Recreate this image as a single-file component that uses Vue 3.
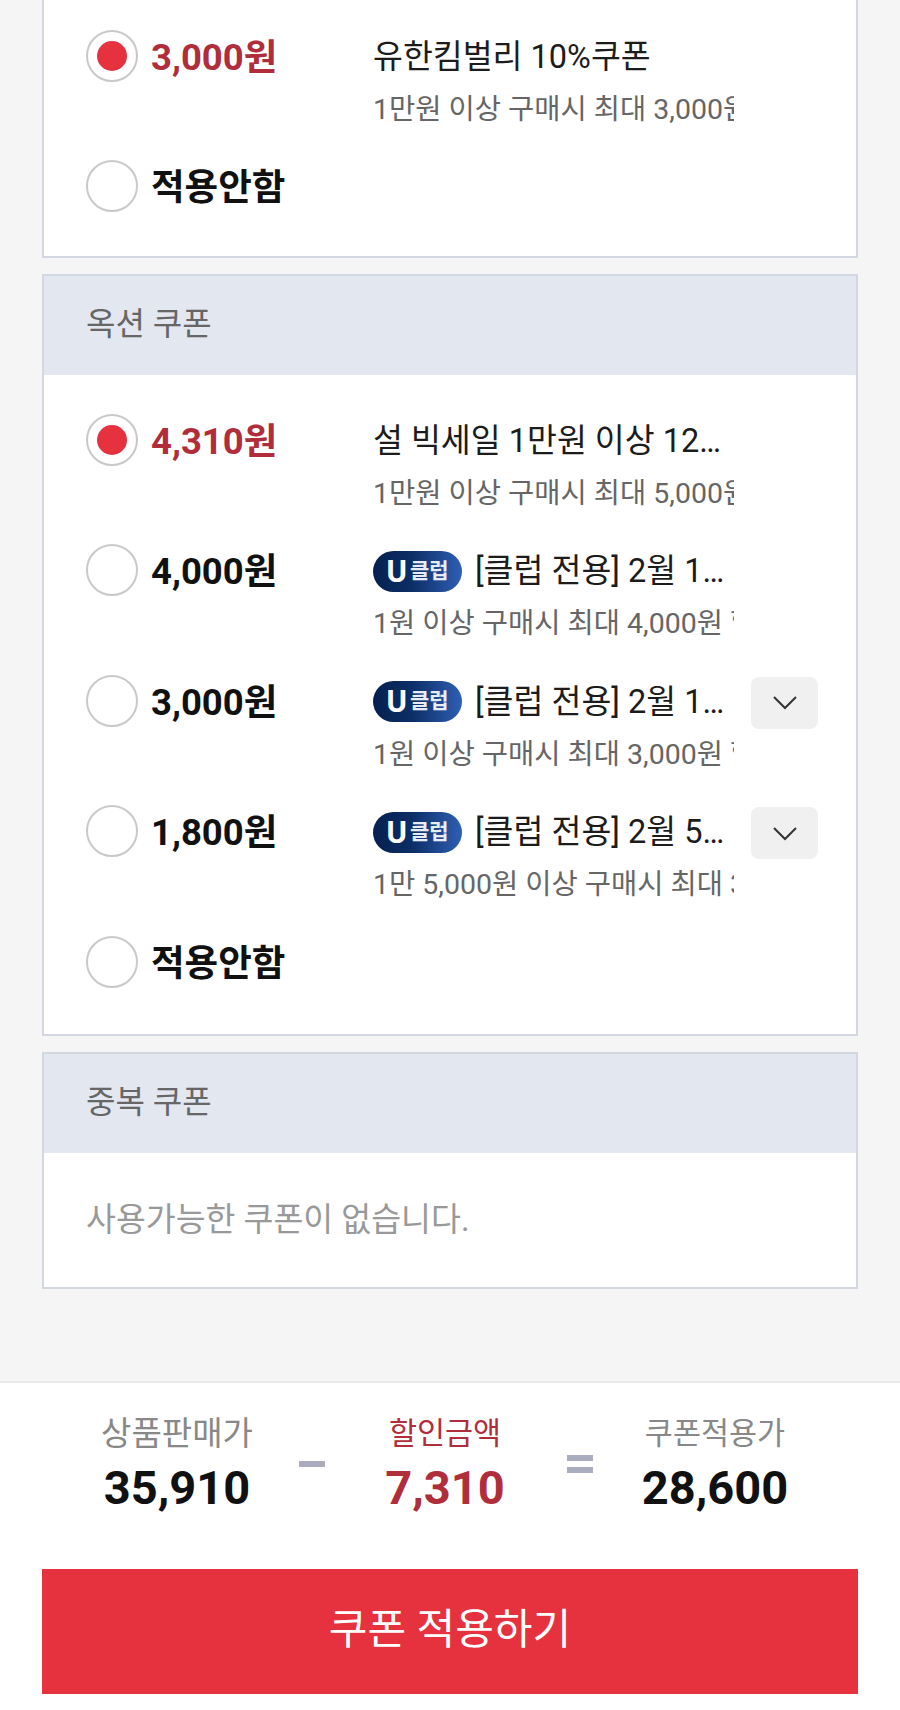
<script setup>
const first = [
  { amount: '3,000원', title: '유한킴벌리 10%쿠폰', sub: '1만원 이상 구매시 최대 3,000원 할인', on: true },
  { amount: '적용안함' }
]
const second = [
  { amount: '4,310원', title: '설 빅세일 1만원 이상 12% 할인쿠폰', sub: '1만원 이상 구매시 최대 5,000원 할인', on: true },
  { amount: '4,000원', title: '[클럽 전용] 2월 10% 할인쿠폰', sub: '1원 이상 구매시 최대 4,000원 할인', club: true },
  { amount: '3,000원', title: '[클럽 전용] 2월 10% 할인쿠폰', sub: '1원 이상 구매시 최대 3,000원 할인', club: true, more: true },
  { amount: '1,800원', title: '[클럽 전용] 2월 5% 할인쿠폰', sub: '1만 5,000원 이상 구매시 최대 3,000원 할인', club: true, more: true },
  { amount: '적용안함' }
]
const sections = [
  { id: 'a', rows: first, cls: 'clipped' },
  { id: 'b', name: '옥션 쿠폰', rows: second },
  { id: 'c', name: '중복 쿠폰', empty: '사용가능한 쿠폰이 없습니다.' }
]
</script>

<template>
  <div class="page">
    <main class="list">
      <section v-for="s in sections" :key="s.id" class="card" :class="s.cls">
        <h2 v-if="s.name" class="head">{{ s.name }}</h2>
        <p v-if="s.empty" class="empty">{{ s.empty }}</p>
        <div v-else class="rows">
          <div v-for="(r, i) in s.rows" :key="i" class="row">
            <span class="radio" :class="{ on: r.on }"></span>
            <span class="amount" :class="{ red: r.on }">{{ r.amount }}</span>
            <div v-if="r.title" class="info">
              <div class="title-line">
                <span v-if="r.club" class="badge"><b>U</b><i>클럽</i></span>
                <span class="title" :class="{ tight: r.club }">{{ r.title }}</span>
              </div>
              <div class="sub">{{ r.sub }}</div>
            </div>
            <button v-if="r.more" class="more" type="button" aria-label="더보기">
              <svg width="26" height="15" viewBox="0 0 26 15"><path d="M2 2 L13 13 L24 2" fill="none" stroke="#333" stroke-width="2"/></svg>
            </button>
          </div>
        </div>
      </section>
    </main>

    <footer class="foot">
      <div class="sum">
        <div class="cell">
          <span class="lab">상품판매가</span>
          <strong class="num">35,910</strong>
        </div>
        <span class="op minus"></span>
        <div class="cell">
          <span class="lab small red">할인금액</span>
          <strong class="num red">7,310</strong>
        </div>
        <span class="op equal"></span>
        <div class="cell">
          <span class="lab small">쿠폰적용가</span>
          <strong class="num">28,600</strong>
        </div>
      </div>
      <button class="apply" type="button">쿠폰 적용하기</button>
    </footer>
  </div>
</template>

<style>
html, body { margin: 0; background: #f5f5f6; }
</style>

<style scoped>
.page {
  height: 1710px;
  overflow: hidden;
  display: flex;
  flex-direction: column;
  background: #f5f5f6;
  font-family: Roboto, "Noto Sans CJK KR", sans-serif;
  color: #111;
}
.list {
  padding: 0 42px;
  display: flex;
  flex-direction: column;
  gap: 16px;
}
.card {
  background: #fff;
  border: 2px solid #d3d7e2;
}
.clipped { border-top: 0; }
.clipped .rows { padding-top: 30px; padding-bottom: 44px; gap: 77.6px; }
.head {
  margin: 0;
  height: 99px;
  box-sizing: border-box;
  padding: 0 0 8px 42px;
  display: flex;
  align-items: center;
  background: #e3e7f0;
  font-size: 32px;
  font-weight: 400;
  color: #666;
}
.rows {
  padding: 39px 38px 46px 42px;
  display: flex;
  flex-direction: column;
  gap: 78.6px;
}
.row {
  height: 52px;
  display: flex;
  align-items: flex-start;
  position: relative;
}
.radio {
  width: 52px;
  height: 52px;
  box-sizing: border-box;
  flex: none;
  border: 2px solid #c9c9c9;
  border-radius: 50%;
  display: flex;
  align-items: center;
  justify-content: center;
}
.radio.on::after {
  content: "";
  width: 30px;
  height: 30px;
  border-radius: 50%;
  background: #e6323f;
}
.amount {
  width: 222px;
  flex: none;
  margin-left: 13px;
  padding-top: 2px;
  font-size: 36.5px;
  font-weight: 700;
  line-height: 52px;
  white-space: nowrap;
}
.amount.red, .num.red { color: #b02e3b; }
.lab.red { color: #b02e3b; }
.info {
  width: 361px;
  flex: none;
  overflow: hidden;
  padding-top: 1px;
}
.title-line {
  height: 52px;
  display: flex;
  align-items: center;
  gap: 13px;
}
.title {
  flex: 1;
  min-width: 0;
  padding-right: 12px;
  font-size: 32.5px;
  line-height: 52px;
  white-space: nowrap;
  overflow: hidden;
  text-overflow: ellipsis;
  color: #1c1c1c;
}
.title.tight { padding-right: 0; }
.badge {
  width: 89px;
  height: 41px;
  flex: none;
  border-radius: 21px;
  display: flex;
  align-items: center;
  justify-content: center;
  gap: 3px;
  color: #fff;
  background: linear-gradient(90deg, #06204f 0%, #0c2f68 45%, #2f5fb4 100%);
}
.badge b { font-size: 31px; font-weight: 700; line-height: 1; }
.badge i { font-size: 21px; font-style: normal; font-weight: 700; line-height: 1; color: #e7ecf7; }
.sub {
  margin-top: 9px;
  font-size: 28.5px;
  line-height: 36px;
  color: #666;
  white-space: nowrap;
}
.more {
  position: absolute;
  top: 2px;
  right: 0;
  width: 67px;
  height: 52px;
  padding: 0;
  border: 0;
  border-radius: 8px;
  background: #f0f0f0;
  display: flex;
  align-items: center;
  justify-content: center;
}
.empty {
  margin: 0;
  height: 134px;
  box-sizing: border-box;
  padding: 0 0 6px 42px;
  display: flex;
  align-items: center;
  font-size: 32.5px;
  color: #999;
}
.foot {
  margin-top: auto;
  height: 329px;
  box-sizing: border-box;
  background: #fff;
  border-top: 2px solid #e9e9ea;
  padding: 29px 42px 16px;
  display: flex;
  flex-direction: column;
}
.sum {
  display: grid;
  grid-template-columns: 270px 0 266px 0 274px;
  align-items: center;
  justify-items: center;
  height: 100px;
}
.cell {
  display: flex;
  flex-direction: column;
  align-items: center;
}
.lab {
  font-size: 33px;
  line-height: 44px;
  color: #888;
}
.lab.small { font-size: 30.5px; }
.num {
  font-size: 47px;
  font-weight: 700;
  line-height: 63px;
}
.op { display: block; background: #a9adbd; margin-top: -3px; }
.minus { width: 26px; height: 6px; }
.equal { width: 26px; height: 18px; margin-left: 3px; background: linear-gradient(#a9adbd 0 6px, transparent 6px 12px, #a9adbd 12px); }
.apply {
  margin-top: auto;
  height: 125px;
  border: 0;
  padding: 0 0 12px;
  background: #e6323f;
  color: #fff;
  font-family: inherit;
  font-size: 42px;
}
</style>
